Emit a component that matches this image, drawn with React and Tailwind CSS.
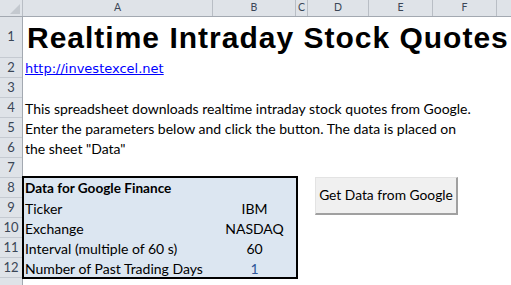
import React from "react";

const rowNums = [
  { n: "1", h: "h-[41px]" },
  { n: "2", h: "h-[20px]" },
  { n: "3", h: "h-[20px]" },
  { n: "4", h: "h-[20px]" },
  { n: "5", h: "h-[20px]" },
  { n: "6", h: "h-[20px]" },
  { n: "7", h: "h-[20px]" },
  { n: "8", h: "h-[20px]" },
  { n: "9", h: "h-[20px]" },
  { n: "10", h: "h-[20px]" },
  { n: "11", h: "h-[20px]" },
  { n: "12", h: "h-[20px]" },
  { n: "", h: "h-[20px]" },
];

const dataRows = [
  { label: "Ticker", value: "IBM", vc: "text-black" },
  { label: "Exchange", value: "NASDAQ", vc: "text-black" },
  { label: "Interval (multiple of 60 s)", value: "60", vc: "text-black" },
  { label: "Number of Past Trading Days", value: "1", vc: "text-[#2f5597]" },
];

export default function App() {
  return (
    <div className="w-[511px] h-[285px] overflow-hidden bg-white font-['Lato',sans-serif] text-black">
      {/* Column header */}
      <div className="flex h-[17px] bg-[#dfe3e8] border-b border-[#a3a9b1] text-[10.5px] text-[#3a4656]">
        <div className="relative w-[23px] shrink-0 border-r border-[#b9bec5]">
          <svg className="absolute left-0 top-0" width="22" height="16" viewBox="0 0 22 16">
            <polygon points="20,4 20,14 10,14" fill="#c4c9cf" />
          </svg>
        </div>
        <div className="w-[190px] shrink-0 border-r border-[#b9bec5] flex items-center justify-center">A</div>
        <div className="w-[83px] shrink-0 border-r border-[#b9bec5] flex items-center justify-center">B</div>
        <div className="w-[12px] shrink-0 border-r border-[#b9bec5] flex items-center justify-center">C</div>
        <div className="w-[61px] shrink-0 border-r border-[#b9bec5] flex items-center justify-center">D</div>
        <div className="w-[64px] shrink-0 border-r border-[#b9bec5] flex items-center justify-center">E</div>
        <div className="w-[64px] shrink-0 border-r border-[#b9bec5] flex items-center justify-center">F</div>
        <div className="flex-1" />
      </div>

      <div className="flex">
        {/* Row header */}
        <div className="w-[23px] shrink-0 bg-[#dfe3e8] border-r border-[#a3a9b1] flex flex-col text-[13px] text-[#3a4656]">
          {rowNums.map((r, i) => (
            <div key={i} className={`${r.h} shrink-0 border-b border-[#c5cad1] flex items-center justify-center`}>
              {r.n}
            </div>
          ))}
        </div>

        {/* Cells */}
        <div className="flex-1 flex flex-col">
          <div className="h-[41px] shrink-0 flex items-center pl-[4px] font-['Liberation_Sans',Arial,sans-serif] font-bold text-[30px] tracking-[1px] whitespace-nowrap leading-none">
            Realtime Intraday Stock Quotes
          </div>
          <div className="h-[20px] shrink-0 flex items-center pl-[2px]">
            <a className="font-['DejaVu_Sans',sans-serif] text-[13px] text-[#0000ff] underline leading-none" href="#">
              http://investexcel.net
            </a>
          </div>
          <div className="h-[20px] shrink-0" />
          <div className="h-[20px] shrink-0 flex items-center pl-[2px] text-[14px] whitespace-nowrap">
            This spreadsheet downloads realtime intraday stock quotes from Google.
          </div>
          <div className="h-[20px] shrink-0 flex items-center pl-[2px] text-[14px] whitespace-nowrap">
            Enter the parameters below and click the button. The data is placed on
          </div>
          <div className="h-[20px] shrink-0 flex items-center pl-[2px] text-[14px] whitespace-nowrap">
            the sheet "Data"
          </div>
          <div className="h-[18px] shrink-0" />

          <div className="flex items-start">
            <div className="-ml-[1px] w-[276px] h-[103px] shrink-0 border-2 border-black bg-[#dce6f1] flex flex-col text-[14px]">
              <div className="h-[20px] shrink-0 flex items-center pl-[1px] font-bold text-[13.6px] whitespace-nowrap">
                Data for Google Finance
              </div>
              {dataRows.map((r, i) => (
                <div key={i} className="h-[20px] shrink-0 flex items-center whitespace-nowrap">
                  <div className="w-[189px] shrink-0 pl-[1px]">{r.label}</div>
                  <div className={`w-[83px] shrink-0 text-center ${r.vc}`}>{r.value}</div>
                </div>
              ))}
            </div>
            <button className="ml-[17px] mt-[1px] w-[143px] h-[38px] shrink-0 bg-[#f0f0f0] border-t border-l border-[#e3e3e3] border-r-2 border-b-2 border-r-[#a0a0a0] border-b-[#a0a0a0] text-[13.8px] flex items-center justify-center whitespace-nowrap">
              Get Data from Google
            </button>
          </div>
        </div>
      </div>
    </div>
  );
}
